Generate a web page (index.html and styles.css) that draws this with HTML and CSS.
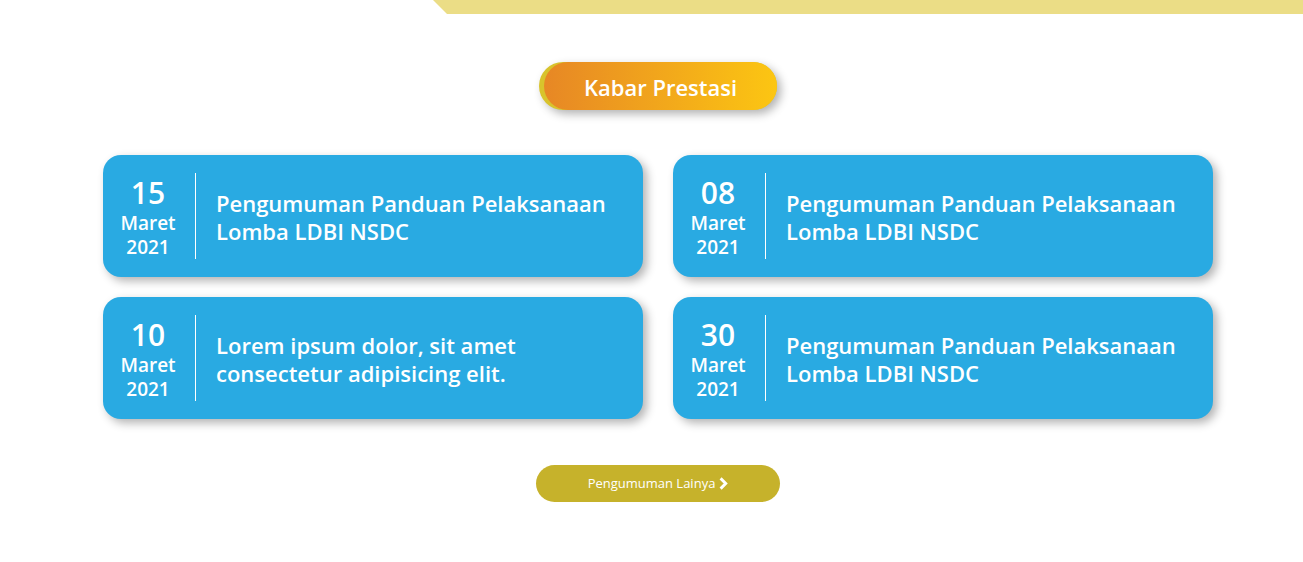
FILE: index.html
```html
<!DOCTYPE html>
<html lang="id">
<head>
<meta charset="utf-8">
<meta name="viewport" content="width=device-width, initial-scale=1">
<title>Kabar Prestasi</title>
<link rel="stylesheet" href="styles.css">
</head>
<body>
<div class="ribbon"></div>
<main class="news">
  <h2 class="news-heading"><span class="news-heading-label">Kabar Prestasi</span></h2>
  <div class="news-grid">
    <article class="card">
      <time class="date" datetime="2021-03-15"><span class="day">15</span><span>Maret</span><span>2021</span></time>
      <h3 class="title">Pengumuman Panduan Pelaksanaan Lomba LDBI NSDC</h3>
    </article>
    <article class="card">
      <time class="date" datetime="2021-03-08"><span class="day">08</span><span>Maret</span><span>2021</span></time>
      <h3 class="title">Pengumuman Panduan Pelaksanaan Lomba LDBI NSDC</h3>
    </article>
    <article class="card">
      <time class="date" datetime="2021-03-10"><span class="day">10</span><span>Maret</span><span>2021</span></time>
      <h3 class="title">Lorem ipsum dolor, sit amet consectetur adipisicing elit.</h3>
    </article>
    <article class="card">
      <time class="date" datetime="2021-03-30"><span class="day">30</span><span>Maret</span><span>2021</span></time>
      <h3 class="title">Pengumuman Panduan Pelaksanaan Lomba LDBI NSDC</h3>
    </article>
  </div>
  <a class="more" href="#">Pengumuman Lainya
    <svg class="chevron" viewBox="0 0 9 13" aria-hidden="true"><path d="M1.6 1.4 6.7 6.5 1.6 11.6" fill="none" stroke="currentColor" stroke-width="2.9"/></svg>
  </a>
</main>
</body>
</html>
```
FILE: styles.css
```css
* {
  box-sizing: border-box;
}

body {
  margin: 0;
  background: #fff;
  color: #fff;
  font-family: "Segoe UI", "Open Sans", "Noto Sans", sans-serif;
}

.ribbon {
  height: 14px;
  margin-left: 433px;
  background: #ebdd86;
  clip-path: polygon(0 0, 100% 0, 100% 100%, 14px 100%);
}

.news {
  display: flex;
  flex-direction: column;
  align-items: center;
  padding: 48px 90px 60px 103px;
}

.news-heading {
  margin: 0;
  padding-left: 5px;
  border-radius: 24px;
  background: #d8c32c;
  box-shadow: 4px 4px 10px rgba(0, 0, 0, 0.3);
}

.news-heading-label {
  display: block;
  padding: 11px 40px 9px;
  border-radius: 24px;
  background: linear-gradient(90deg, #e78725, #fcc612);
  font-size: 22px;
  font-weight: 600;
  line-height: 28px;
}

.news-grid {
  display: grid;
  grid-template-columns: repeat(auto-fit, minmax(min(100%, 400px), 1fr));
  gap: 20px 30px;
  width: 100%;
  max-width: 1110px;
  margin-top: 45px;
}

.card {
  display: flex;
  padding: 18px;
  border-radius: 18px;
  background: #29aae2;
  box-shadow: 4px 4px 10px rgba(0, 0, 0, 0.3);
}

.date {
  display: flex;
  flex-direction: column;
  flex-shrink: 0;
  align-items: center;
  width: 75px;
  padding-right: 20px;
  border-right: 1px solid #fff;
  font-size: 19px;
  font-weight: 600;
  line-height: 24px;
}

.day {
  padding-top: 2px;
  font-size: 30px;
  line-height: 36px;
}

.title {
  align-self: center;
  margin: 0;
  padding: 2px 0 0 20px;
  font-size: 22px;
  font-weight: 600;
  line-height: 28px;
}

.more {
  display: flex;
  align-items: center;
  justify-content: center;
  gap: 4px;
  width: 244px;
  margin-top: 46px;
  padding: 8px 0;
  border-radius: 19px;
  background: #c6b22b;
  color: #fff;
  font-size: 13px;
  line-height: 21px;
  text-decoration: none;
}

.chevron {
  width: 9px;
  height: 13px;
}
```
